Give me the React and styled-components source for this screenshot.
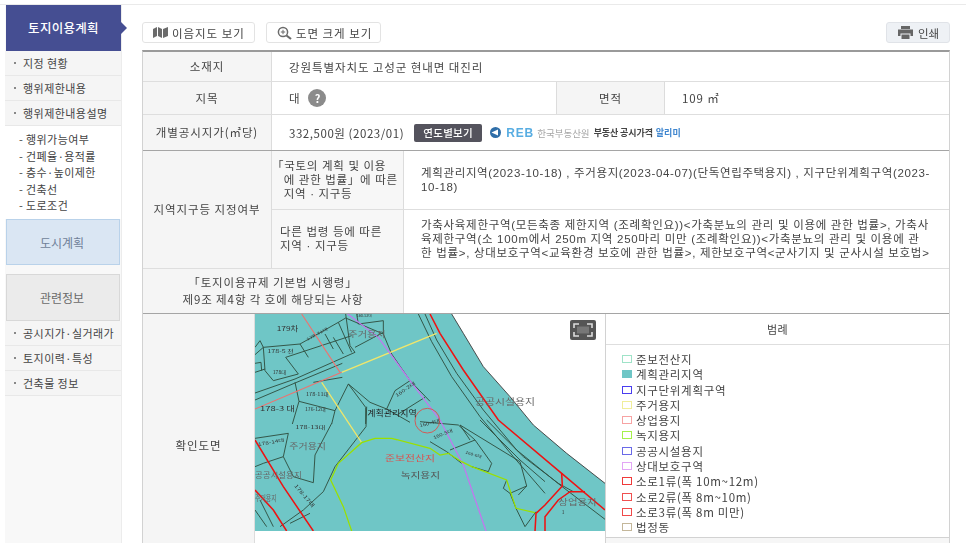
import React from "react";
import styled, { createGlobalStyle } from "styled-components";

const Global = createGlobalStyle`
  html, body { margin: 0; padding: 0; background: #fff; overflow: hidden; }
  * { box-sizing: border-box; }
  body { font-family: "Noto Sans CJK KR", "Noto Sans", sans-serif; color: #444; }
`;

const Page = styled.div`
  width: 966px; height: 539px; margin-top: 4px; display: flex; overflow: hidden;
  padding: 0 0 0 5px; filter: blur(0.35px);
  border-top: 1px solid #eaeaea;
`;
const Side = styled.aside`
  width: 117px; flex: none; background: #f8f8f8; border-right: 1px solid #ececec;
  display: flex; flex-direction: column;
`;
const SideHead = styled.div`
  position: relative; height: 46px; flex: none; margin-left: 1px; background: #454e92; color: #fff; font-size: 12.5px; font-weight: 500;
  display: flex; align-items: center; justify-content: center; letter-spacing: .3px; padding-bottom: 2px;
  &::after { content: ""; position: absolute; left: 100%; top: 17px; border-left: 6px solid #454e92; border-top: 6px solid transparent; border-bottom: 6px solid transparent; }
`;
const SideItem = styled.div`
  height: 25px; flex: none; background: #f5f5f5; border-bottom: 1px solid #e8e8e8; font-size: 11px; letter-spacing: .45px; color: #444; display: flex; align-items: center; padding-left: 9px; gap: 7px; white-space: nowrap;
  &::before { content: ""; width: 2px; height: 2px; background: #888; flex: none; }
`;
const SubList = styled.div`
  background: #fff; padding: 5px 0 0 14px; display: flex; flex-direction: column; height: 93px; flex: none;
`;
const SubItem = styled.div`
  height: 16.5px; line-height: 16.5px; font-size: 11px; letter-spacing: .4px; color: #444; white-space: nowrap;
`;
const Block = styled.div`
  height: ${p => p.$h}px; flex: none; margin: ${p => p.$mt}px 1px 0 1px; display: flex; align-items: center; justify-content: center; font-size: 12px; padding-right: 2px;
  background: ${p => p.$blue ? "#dae6f3" : "#ebebeb"}; border: 1px solid ${p => p.$blue ? "#b9d2ea" : "#d8d8d8"}; color: ${p => p.$blue ? "#6f7f98" : "#6a6a6a"};
`;
const Main = styled.main`
  margin-left: 20px; width: 808px; flex: none; display: flex; flex-direction: column;
`;
const Toolbar = styled.div`
  height: 45px; flex: none; display: flex; align-items: flex-start; gap: 11px; padding-top: 17px;
`;
const ToolBtn = styled.div`
  height: 21px; width: ${p => p.$w}px; padding-left: 10px; display: flex; align-items: center; gap: 4px; font-size: 11.5px; color: #444; background: #fff; border: 1px solid #e3e3e3; border-radius: 3px; white-space: nowrap; letter-spacing: .95px;
`;
const PrintBtn = styled(ToolBtn)`
  margin-left: auto; background: #eef1f5; border-color: #e0e3e8; gap: 4px; letter-spacing: 0;
`;
const Table = styled.div`
  border-top: 2px solid #9a9a9a; border-left: 1px solid #d2d2d2; border-right: 1px solid #d2d2d2; display: flex; flex-direction: column; flex: none;
`;
const Row = styled.div`
  display: flex; height: ${p => p.$h}px; flex: none; border-bottom: ${p => p.$strong ? "1px solid #a5a5a5" : "1px solid #dedede"};
`;
const Label = styled.div`
  width: ${p => p.$w}px; flex: none; background: #f5f5f5; border-right: 1px solid #dcdcdc; display: flex; align-items: center; justify-content: center; text-align: center; font-size: 11.5px; line-height: 17px; color: #444; letter-spacing: .9px; white-space: nowrap;
`;
const Value = styled.div`
  flex: ${p => p.$w ? "none" : 1}; width: ${p => p.$w ? p.$w + "px" : "auto"}; display: flex; align-items: center; gap: 8px; padding: 0 17px; font-size: 11.5px; color: #444; letter-spacing: .9px; min-width: 0; white-space: nowrap; border-right: ${p => p.$w ? "1px solid #dcdcdc" : "0"};
`;
const Price = styled.span`
  letter-spacing: .55px; margin-right: 2px;
`;
const Help = styled.span`
  width: 18px; height: 18px; border-radius: 50%; background: #8b8b8b; color: #fff; font-size: 11px; font-weight: 700; display: flex; align-items: center; justify-content: center; line-height: 1; letter-spacing: 0;
`;
const YearBtn = styled.span`
  height: 18px; width: 68px; background: #54535d; border-radius: 2px; color: #fff; font-size: 10.5px; font-weight: 500; display: flex; align-items: center; justify-content: center; letter-spacing: .3px; flex: none;
`;
const Reb = styled.span`
  display: flex; align-items: center; gap: 3px; font-size: 9.5px; white-space: nowrap; color: #a5a5a5; letter-spacing: 0; margin-left: -2px;
`;
const RebMark = styled.span`
  font-family: "Liberation Sans", sans-serif; font-weight: 700; font-size: 12px; color: #58ade2; letter-spacing: .9px; display: flex; align-items: center; gap: 3px;
`;
const RebDark = styled.b`
  color: #444; font-size: 9px; font-weight: 700; margin-left: 1px; letter-spacing: -.1px;
`;
const RebBlue = styled.b`
  color: #3f86cf; font-size: 9px; font-weight: 700;
`;
const ZoneWrap = styled.div`
  display: flex; height: 118px; flex: none; border-bottom: 1px solid #dedede;
`;
const ZoneCol = styled.div`
  flex: 1; display: flex; flex-direction: column; min-width: 0;
`;
const ZoneRow = styled.div`
  display: flex; flex: 1; &:first-child { border-bottom: 1px solid #dedede; }
`;
const SubLabel = styled.div`
  width: 132px; flex: none; background: #f7f7f7; border-right: 1px solid #dcdcdc; padding: 0 0 0 ${p => p.$pl}px; display: flex; align-items: center; font-family: "Liberation Sans", "Noto Sans CJK KR", sans-serif; font-size: 11.5px; line-height: 14px; letter-spacing: .7px; color: #444; white-space: nowrap;
`;
const ZoneText = styled.div`
  flex: 1; padding: 0 0 0 17px; display: flex; align-items: center; font-family: "Liberation Sans", "Noto Sans CJK KR", sans-serif; font-size: 11.5px; line-height: 14px; color: #444; letter-spacing: ${p => p.$ls}px; white-space: nowrap;
`;
const MapRow = styled.div`
  display: flex; flex: none; height: 262px;
`;
const MapBox = styled.div`
  position: relative; width: 350px; flex: none; height: 100%; background: #fff;
`;
const MapSvg = styled.svg`
  display: block; width: 350px; height: 217px;
`;
const Expand = styled.div`
  position: absolute; top: 6px; right: 9px; width: 26px; height: 20px; background: #555; border-radius: 2px; display: flex; align-items: center; justify-content: center;
`;
const LegendCol = styled.div`
  flex: 1; border-left: 1px solid #d2d2d2; display: flex; flex-direction: column; min-width: 0;
`;
const LegendHead = styled.div`
  height: 31px; flex: none; border-bottom: 1px solid #dedede; display: flex; align-items: center; justify-content: center; font-size: 11px; color: #444; letter-spacing: .4px;
`;
const LegendList = styled.ul`
  list-style: none; margin: 0; padding: 6.5px 0 0 16px; height: 193px; flex: none; border-bottom: 1px solid #d2d2d2; display: flex; flex-direction: column;
`;
const LegendItem = styled.li`
  height: 15.27px; flex: none; display: flex; align-items: center; gap: 4px; font-size: 11.5px; color: #444; letter-spacing: .7px; white-space: nowrap;
`;
const Swatch = styled.i`
  width: 10px; height: 8px; flex: none; display: block; border: 1.3px solid ${p => p.$c}; background: ${p => p.$fill || "transparent"};
`;
const Foot = styled.div`
  flex: 1; background: #f6f6f6;
`;

const legend = [
  ["준보전산지", "#9fe3c8"],
  ["계획관리지역", "#6fc6c6", "#6fc6c6"],
  ["지구단위계획구역", "#4a3df0"],
  ["주거용지", "#f0ee9a"],
  ["상업용지", "#f7a3a3"],
  ["녹지용지", "#a6f04a"],
  ["공공시설용지", "#6a6ae8"],
  ["상대보호구역", "#e3a6f5"],
  ["소로1류(폭 10m~12m)", "#f03a3a"],
  ["소로2류(폭 8m~10m)", "#f05050"],
  ["소로3류(폭 8m 미만)", "#f04a4a"],
  ["법정동", "#c4b79a"],
];

const L = "#2f4f3f";
// x, y, text, font size, colour, drawn length, rotation
const labels = [
  [80, 64, "179차", 20, "#333", 65, 0],
  [68, 192, "178대", 14, "#333", 40, 0],
  [30, 304, "178-3 대", 20, "#333", 105, 0],
  [168, 258, "178-11대", 13, "#333", 68, 0],
  [165, 304, "176-12대", 13, "#333", 62, 0],
  [136, 356, "178-13대", 14, "#333", 90, 0],
  [25, 408, "178-14대", 13, "#333", 80, -10],
  [52, 128, "178-5 전", 15, "#333", 80, 0],
  [172, 92, "178-31대", 11, "#333", 70, -28],
  [320, 22, "160-12대", 10, "#333", 45, 0],
  [440, 262, "160-2대", 13, "#333", 70, -35],
  [510, 352, "160-4대", 14, "#333", 62, -15],
  [552, 388, "160-5대", 13, "#333", 62, -22],
  [646, 430, "160-6대", 11, "#333", 50, 18],
  [132, 528, "178-17대", 15, "#333", 85, 50],
  [295, 80, "주거용지", 24, "#666", 112, 0],
  [118, 418, "주거용지", 24, "#666", 110, 0],
  [15, 504, "공공시설용지", 24, "#666", 140, 0],
  [15, 572, "주거용지", 24, "#666", 65, 0],
  [675, 284, "공공시설용지", 26, "#666", 180, 0],
  [352, 318, "계획관리지역", 23, "#222", 148, 0],
  [405, 452, "준보전산지", 25, "#d9534f", 150, 0],
  [452, 504, "녹지용지", 25, "#555", 118, 0],
  [925, 584, "상업용지", 24, "#666", 115, 0],
  [935, 612, "1", 14, "#333", 8, 0],
];

function MapDrawing() {
  return (
    <MapSvg viewBox="15 12 1050 651" preserveAspectRatio="none">
      <rect x="15" y="12" width="1050" height="651" fill="#6fc6c6" />
      <path d="M605 12 L640 70 L700 170 L780 260 L850 345 L950 430 L1065 520 L1065 12Z" fill="#fff" />
      <g fill="none" stroke={L} strokeWidth="2.8">
        <path d="M605 12 L640 70 L700 170 L780 260 L850 345 L950 430 L1065 520" stroke="#3f3f3f" />
        <path d="M525 12 L560 90 L620 190 L700 300 L800 420 L930 525 L1065 628" />
        <path d="M505 12 L545 95 L605 200 L690 320 L790 440 L885 550" />
        <path d="M350 290 L348 350 L255 470 L220 545 L160 600 L90 650" />
        <path d="M15 385 L115 370 L100 440 L40 460 L15 470 M100 440 L130 500 L190 518 L195 435 L245 340" />
        <path d="M30 570 L70 650 M15 600 L50 650 M120 640 L180 610" />
      </g>
      <g transform="translate(15 12)" fill="none" stroke={L} strokeWidth="2.8">
        <path d="M272 0 L285 95 L300 115 M272 12 L385 60 L410 120 L465 200 L525 262" />
        <path d="M305 0 L310 30 L385 20 L385 60 M300 100 L385 55" />
        <path d="M0 100 L15 80 L25 100 L135 90 L250 25 L272 12 M0 122 L25 100 L30 170 L55 200 L130 180 L92 130 L290 65" />
        <path d="M0 175 L30 165 M0 148 L18 145 L20 170 M135 90 L160 130 M210 60 L235 105 M235 70 L265 120 M250 25 L290 115" />
        <path d="M0 237 L120 195 L300 115 M0 258 L120 207 L262 148" />
        <path d="M120 205 L132 262 L112 330 M132 262 L240 290 L280 210 L332 280 L332 330 M280 210 L345 265 L395 285 L465 325 M240 290 L230 330 M395 285 L420 230 L465 200 M430 300 L510 250 M175 205 L262 190" />
      </g>
      <g transform="translate(540 330)" fill="none" stroke={L} strokeWidth="2.8">
        <path d="M170 0 L280 110 L385 190 L430 215 M150 0 L270 120 L345 185" />
        <path d="M0 65 L50 95 L95 130 M-30 5 L85 15 L135 60 L185 130 L175 155 L125 140 M60 90 L135 60 M90 15 L120 60" />
        <path d="M230 180 L220 205 L240 220 L290 198 L270 125 L90 15 M240 220 L258 265 L285 320 L318 275 M290 198 L265 225" />
      </g>
      <g fill="none" strokeWidth="3.8">
        <path d="M215 217 L335 398" stroke="#f1e66a" />
        <path d="M275 187 L560 70" stroke="#f1e66a" />
        <path d="M155 12 L270 187" stroke="#f0716e" strokeWidth="3.2" />
        <path d="M15 297 L275 187" stroke="#f0716e" strokeWidth="3.2" />
        <path d="M293 12 L385 82 L425 137 L480 212 L570 330 L640 465 L708 663" stroke="#c277ee" />
        <path d="M305 663 L280 590 L242 510 L265 460 L335 398 L375 385 L425 385 L540 415 L570 435 L595 430 L635 455 L665 470 L770 510 L798 595 L855 608" stroke="#9ae000" />
        <g stroke="#ee1212" strokeWidth="4.6">
          <path d="M540 12 L570 70 L640 180 L745 330 L935 490 L1065 600" />
          <path d="M935 490 L937 528 L885 585 L858 610 L855 663 M885 663 L885 620 L925 570 L960 545 L1005 545" />
          <path d="M15 390 L100 530 L190 663 M15 540 L70 600 L110 663" />
        </g>
      </g>
      <circle cx="532" cy="332" r="37" fill="none" stroke="#d9534f" strokeWidth="2.8" />
      {labels.map(([x, y, t, s, c, len, rot], i) => (
        <text key={i} x={x} y={y} fontSize={s} fill={c} textLength={len} lengthAdjust="spacingAndGlyphs" transform={rot ? `rotate(${rot} ${x} ${y})` : undefined} fontFamily='"Noto Sans CJK KR", sans-serif'>{t}</text>
      ))}
    </MapSvg>
  );
}

export default function App() {
  return (
    <Page>
      <Global />
      <Side>
        <SideHead>토지이용계획</SideHead>
        <SideItem>지정 현황</SideItem>
        <SideItem>행위제한내용</SideItem>
        <SideItem>행위제한내용설명</SideItem>
        <SubList>
          <SubItem>- 행위가능여부</SubItem>
          <SubItem>- 건폐율·용적률</SubItem>
          <SubItem>- 층수·높이제한</SubItem>
          <SubItem>- 건축선</SubItem>
          <SubItem>- 도로조건</SubItem>
        </SubList>
        <Block $blue $h={46} $mt={0}>도시계획</Block>
        <Block $h={47} $mt={9}>관련정보</Block>
        <SideItem>공시지가·실거래가</SideItem>
        <SideItem>토지이력·특성</SideItem>
        <SideItem>건축물 정보</SideItem>
      </Side>
      <Main>
        <Toolbar>
          <ToolBtn $w={113}>
            <svg width="15" height="11" viewBox="0 0 15 11" fill="#6b6b6b"><path d="M0 2 L4 0 V9 L0 11Z M5 0 L9 2 V11 L5 9Z M10 2 L15 0 V9 L10 11Z" /></svg>
            이음지도 보기
          </ToolBtn>
          <ToolBtn $w={115}>
            <svg width="15" height="14" viewBox="0 0 15 14" fill="none" stroke="#6b6b6b"><circle cx="6" cy="6" r="4.6" strokeWidth="1.5" /><path d="M9.5 9.5 L14 13" strokeWidth="2.2" /><path d="M3.8 6H8.2M6 3.8V8.2" /></svg>
            도면 크게 보기
          </ToolBtn>
          <PrintBtn $w={64}>
            <svg width="17" height="13" viewBox="0 0 17 13" fill="#666"><path d="M4 0H13V3H4Z M1 3.6H16V10H13.5V7.5H3.5V10H1Z M4.5 8.5H12.5V13H4.5Z" /></svg>
            인쇄
          </PrintBtn>
        </Toolbar>
        <Table>
          <Row $h={30}>
            <Label $w={129}>소재지</Label>
            <Value>강원특별자치도 고성군 현내면 대진리</Value>
          </Row>
          <Row $h={33}>
            <Label $w={129}>지목</Label>
            <Value $w={285}>대<Help>?</Help></Value>
            <Label $w={108}>면적</Label>
            <Value>109 ㎡</Value>
          </Row>
          <Row $h={36} $strong>
            <Label $w={129}>개별공시지가(㎡당)</Label>
            <Value>
              <Price>332,500원 (2023/01)</Price>
              <YearBtn>연도별보기</YearBtn>
              <Reb>
                <RebMark>
                  <svg width="15" height="11" viewBox="0 0 15 11"><path d="M7.5 0A5.5 5.5 0 1 0 7.5 11A5.5 5.5 0 0 0 7.5 0Z" fill="#2f6ea8" /><path d="M3.5 5.5L10 2.6V8.4Z" fill="#fff" /></svg>
                  REB
                </RebMark>
                한국부동산원
                <RebDark>부동산 공시가격</RebDark>
                <RebBlue>알리미</RebBlue>
              </Reb>
            </Value>
          </Row>
          <ZoneWrap>
            <Label $w={129}>지역지구등 지정여부</Label>
            <ZoneCol>
              <ZoneRow>
                <SubLabel $pl={0}>「국토의 계획 및 이용<br />&nbsp;&nbsp;&nbsp;에 관한 법률」에 따른<br />&nbsp;&nbsp;&nbsp;지역 · 지구등</SubLabel>
                <ZoneText $ls={0.64}><span>계획관리지역(2023-10-18) , 주거용지(2023-04-07)(단독연립주택용지) , 지구단위계획구역(2023-<br />10-18)</span></ZoneText>
              </ZoneRow>
              <ZoneRow>
                <SubLabel $pl={8}>다른 법령 등에 따른<br />지역 · 지구등</SubLabel>
                <ZoneText $ls={0.7}><span>가축사육제한구역(모든축종 제한지역 (조례확인요))&lt;가축분뇨의 관리 및 이용에 관한 법률&gt;, 가축사<br />육제한구역(소 100m에서 250m 지역 250마리 미만 (조례확인요))&lt;가축분뇨의 관리 및 이용에 관<br />한 법률&gt;, 상대보호구역&lt;교육환경 보호에 관한 법률&gt;, 제한보호구역&lt;군사기지 및 군사시설 보호법&gt;</span></ZoneText>
              </ZoneRow>
            </ZoneCol>
          </ZoneWrap>
          <Row $h={45} $strong>
            <Label $w={261}>「토지이용규제 기본법 시행령」<br />제9조 제4항 각 호에 해당되는 사항</Label>
            <Value />
          </Row>
          <MapRow>
            <Label $w={112}>확인도면</Label>
            <MapBox>
              <MapDrawing />
              <Expand>
                <svg width="20" height="14" viewBox="0 0 20 14" fill="none" stroke="#ddd" strokeWidth="1.6"><path d="M1 5V1H6M14 1H19V5M19 9V13H14M6 13H1V9" /><rect x="4" y="3.5" width="12" height="7" fill="#777" stroke="none" /></svg>
              </Expand>
            </MapBox>
            <LegendCol>
              <LegendHead>범례</LegendHead>
              <LegendList>
                {legend.map(([t, c, f]) => (
                  <LegendItem key={t}><Swatch $c={c} $fill={f} />{t}</LegendItem>
                ))}
              </LegendList>
              <Foot />
            </LegendCol>
          </MapRow>
        </Table>
      </Main>
    </Page>
  );
}
